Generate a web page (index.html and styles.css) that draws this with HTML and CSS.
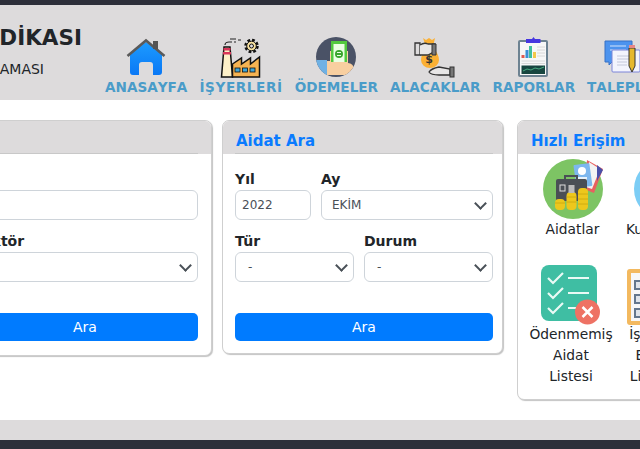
FILE: index.html
```html
<!DOCTYPE html>
<html lang="tr">
<head>
<meta charset="utf-8">
<title>Aidat</title>
<link rel="stylesheet" href="styles.css">
</head>
<body>
<div class="page">
  <div class="topbar"></div>
  <header class="header">
    <div class="brand">
      <div class="brand-title">APARTMAN SENDİKASI</div>
      <div class="brand-sub">AİDAT UYGULAMASI</div>
    </div>
    <nav class="nav">
      <a class="nav-item">
        <svg class="nav-icon" viewBox="0 0 44 40"><defs><linearGradient id="houseBlue" x1="0" y1="0" x2="0" y2="1"><stop offset="0" stop-color="#1c9bff"/><stop offset="1" stop-color="#0a78f5"/></linearGradient></defs><path d="M6 17 22 5l16 12v18a3 3 0 0 1-3 3h-6V28a3 3 0 0 0-3-3h-8a3 3 0 0 0-3 3v10H9a3 3 0 0 1-3-3z" fill="url(#houseBlue)"/><path d="M3.500 19 22 3.500 40.500 19" fill="none" stroke="#5a5a5a" stroke-width="2.600"/><rect x="29" y="4" width="5" height="8" fill="#555"/></svg>
        <span>ANASAYFA</span>
      </a>
      <a class="nav-item nav-item-spaced">
        <svg class="nav-icon" viewBox="0 0 44 40"><path d="M6 8c0-2 2-3 4-3h3M15 5h2M11 2h6M19 3h3" fill="none" stroke="#222" stroke-width="1.200"/><path d="M5 10h6l2.500 30H2.500z" fill="#fdf0c8" stroke="#111" stroke-width="1.500"/><rect x="4.500" y="11" width="7" height="2.500" fill="#d9365a"/><rect x="4" y="15" width="8" height="2.500" fill="#d9365a"/><path d="M13.500 27l9-6v6l9-6v6l9-7v20h-27z" fill="#f6b352" stroke="#111" stroke-width="1.500"/><g fill="#3ea6d8" stroke="#111" stroke-width=".8"><rect x="16" y="31" width="5" height="4"/><rect x="23.500" y="31" width="5" height="4"/><rect x="31" y="31" width="5" height="4"/></g><circle cx="32.500" cy="9" r="5.500" fill="none" stroke="#111" stroke-width="3.500" stroke-dasharray="2.500 1.800"/><circle cx="32.500" cy="9" r="4.800" fill="#f9e2a0" stroke="#111"/><circle cx="32.500" cy="9" r="2" fill="#dddbdc" stroke="#111"/></svg>
        <span>İŞYERLERİ</span>
      </a>
      <a class="nav-item">
        <svg class="nav-icon" viewBox="0 0 44 40"><defs><clipPath id="round"><circle cx="22" cy="20" r="20"/></clipPath></defs><circle cx="22" cy="20" r="20" fill="#4a5266"/><g clip-path="url(#round)"><rect x="0" y="23" width="13" height="18" fill="#6fb1e4"/><path d="M13 24h3V14h18v12a2 2 0 0 1 0 12H13z" fill="#f8cfa0"/></g><rect x="17" y="4" width="16" height="24" fill="#52c93f"/><rect x="19.500" y="7" width="11" height="19" fill="#eaffe4"/><circle cx="25" cy="17" r="4" fill="#3aa52f"/><path d="M23 15.500h4M23 18.500h4" stroke="#eaffe4"/><path d="M17 25h17v3a3 3 0 0 1-3 3H17z" fill="#f8cfa0"/></svg>
        <span>ÖDEMELER</span>
      </a>
      <a class="nav-item">
        <svg class="nav-icon" viewBox="0 0 44 40"><path d="M10 1l3 2 3-2 3 2 3-2-2 9c4 5 6 9 6 13a9 8 0 0 1-18 0c0-4 2-8 5-13z" fill="#fbb034"/><path d="M2 6h5v12H2z" fill="#dddbdc" stroke="#333" stroke-width="1.300"/><path d="M7 8c3-2 6-2 8-1h7v9h-3l-4 2H7" fill="#e8e6e6" stroke="#333" stroke-width="1.300"/><path d="M19 7h4v11h-4z" fill="#777" stroke="#333"/><text class="dollar" x="16" y="26" font-size="11" font-weight="700" fill="#333" text-anchor="middle">$</text><path d="M16 35c2-3 5-4 10-5l11 2v6H26c-4 0-8 0-10-3z" fill="#e8e6e6" stroke="#333" stroke-width="1.300"/><rect x="37" y="30" width="4" height="10" fill="#777" stroke="#333"/></svg>
        <span>ALACAKLAR</span>
      </a>
      <a class="nav-item">
        <svg class="nav-icon" viewBox="0 0 44 40"><rect x="6" y="3" width="30" height="37" rx="2" fill="#6d8291"/><rect x="8" y="5" width="26" height="33" fill="#f7f7f7"/><path d="M14 6V2h6l1.500-2L23 2h5.500v4z" fill="#4636e0"/><rect x="9.500" y="18" width="3" height="3" fill="#e05a50"/><rect x="13.500" y="13" width="3" height="8" fill="#3b8fd8"/><rect x="17" y="9" width="3" height="12" fill="#3fbfa0"/><rect x="21" y="15" width="3" height="6" fill="#f3c84a"/><path d="M25 10h8M25 13h8M25 16h8M25 19h8M9.500 24h23.500M9.500 26.500h23.500" stroke="#d8d8d8"/><rect x="9.500" y="28.500" width="23.500" height="8.500" fill="#17453f"/><path d="M11 34l4-2 4 1 4-2 4 1 5-2" fill="none" stroke="#55c490" stroke-width=".8"/></svg>
        <span>RAPORLAR</span>
      </a>
      <a class="nav-item">
        <svg class="nav-icon" viewBox="0 0 44 40"><path d="M2 4h27v21H9l-3 3v-3H2z" fill="#4c93ee" stroke="#3770c4"/><path d="M7 9h16M7 13h16" stroke="#d4e4fb"/><rect x="9" y="13" width="28" height="22" rx="1" fill="#f3f4fd" stroke="#7c85d8"/><path d="M14 19h14M14 22h14M14 25h10M14 28h10" stroke="#c4c8da"/><path d="M26 11h6v18l-3 6-3-6z" fill="#e5b82e" stroke="#333"/><rect x="26" y="8" width="6" height="3" fill="#e88787"/></svg>
        <span>TALEPLER</span>
      </a>
    </nav>
  </header>
  <main class="content">
    <section class="card card-first">
      <h2 class="card-title"><span class="card-title-text">&nbsp;</span></h2>
      <div class="card-body">
        <div class="field-row">
          <label class="field grow"><span class="field-label">Ad</span><input class="control" type="text"></label>
        </div>
        <div class="field-row">
          <label class="field grow"><span class="field-label">Sektör</span><span class="control select"></span></label>
        </div>
        <button class="btn" type="button">Ara</button>
      </div>
    </section>
    <section class="card card-second">
      <h2 class="card-title"><span class="card-title-text">Aidat Ara</span></h2>
      <div class="card-body">
        <div class="field-row">
          <label class="field f-year"><span class="field-label">Yıl</span><span class="control value">2022</span></label>
          <label class="field grow"><span class="field-label">Ay</span><span class="control select month">EKİM</span></label>
        </div>
        <div class="field-row">
          <label class="field f-type"><span class="field-label">Tür</span><span class="control select dash">-</span></label>
          <label class="field grow"><span class="field-label">Durum</span><span class="control select dash">-</span></label>
        </div>
        <button class="btn" type="button">Ara</button>
      </div>
    </section>
    <section class="card card-quick">
      <h2 class="card-title"><span class="card-title-text">Hızlı Erişim</span></h2>
      <div class="quick-list">
        <div class="quick-row quick-row-top">
          <a class="quick-item quick-item-wide">
            <svg class="quick-icon" viewBox="0 0 60 60"><circle cx="30" cy="30" r="30" fill="#7dc464"/><path d="M44 1l16 9-9 24-10-4z" fill="#e86060"/><path d="M46 3l11 7-8 20-6-2z" fill="#f3f3f3"/><path d="M54 6l6 5-6 11z" fill="#4a50a8"/><rect x="32" y="5" width="16" height="23" rx="1" fill="#7db7ee" transform="rotate(-8 40 17)"/><circle cx="39" cy="12" r="4" fill="#fff"/><rect x="35" y="18" width="9" height="5" fill="#e8f2fb"/><path d="M22 20v-3h12v3" fill="none" stroke="#4a4f55" stroke-width="2"/><rect x="13" y="20" width="31" height="22" rx="2" fill="#4a4f55"/><rect x="17" y="26" width="5" height="6" fill="none" stroke="#ddd"/><rect x="12" y="40" width="10" height="11" rx="4" fill="#edc71c"/><rect x="23.500" y="33" width="10" height="18" rx="4" fill="#edc71c"/><rect x="35" y="29" width="10" height="22" rx="4" fill="#edc71c"/><rect x="25.500" y="26" width="6" height="8" fill="#bbb"/><path d="M12 44h10M23.500 38h10M23.500 43h10M35 35h10M35 40h10M35 45h10" stroke="#c9a60f" stroke-width=".8"/></svg>
            <span>Aidatlar</span>
          </a>
          <a class="quick-item quick-item-wide">
            <svg class="quick-icon" viewBox="0 0 60 60"><circle cx="30" cy="30" r="30" fill="#7ccdf5"/><circle cx="30" cy="24" r="10" fill="#f0c8a0"/><path d="M8 56c4-14 12-18 22-18s18 4 22 18z" fill="#444"/></svg>
            <span>Kullanıcılar</span>
          </a>
        </div>
        <div class="quick-row quick-row-bottom">
          <a class="quick-item quick-item-wide">
            <svg class="quick-icon" viewBox="0 0 60 60"><rect x="0" y="0" width="56" height="56" rx="8" fill="#3fbea3"/><path d="M7 13l5 5 10-10M7 28l5 5 10-10M7 43l5 5 10-10" fill="none" stroke="#eafaf5" stroke-width="2.200"/><path d="M27 13h21M27 28h21M27 43h8" stroke="#eafaf5" stroke-width="2"/><circle cx="46.500" cy="47" r="12.500" fill="#ee7264"/><path d="M41.500 42l10 10M51.500 42l-10 10" stroke="#fff" stroke-width="2.500"/></svg>
            <span>Ödenmemiş<br>Aidat<br>Listesi</span>
          </a>
          <a class="quick-item quick-item-narrow">
            <svg class="quick-icon" viewBox="0 0 60 60"><rect x="0" y="4" width="48" height="56" rx="3" fill="#f3b95f"/><rect x="4" y="8" width="40" height="48" fill="#f7f7f7"/><path d="M8 16h8v8H8zM8 30h8v8H8zM8 44h8v8H8z" fill="#dfe4ea" stroke="#64778d" stroke-width="2"/><rect x="14" y="0" width="16" height="6" rx="2" fill="#d2873e"/></svg>
            <span>İşyerleri<br>Ekstre<br>Listeleri</span>
          </a>
        </div>
      </div>
    </section>
  </main>
  <footer class="footer"></footer>
  <div class="bottombar"></div>
</div>
</body>
</html>
```
FILE: styles.css
```css
* { box-sizing: border-box; }
html, body { margin: 0; padding: 0; overflow: hidden; background: #fff; }
body { font-family: "DejaVu Sans", sans-serif; color: #212529; }
.page { width: 640px; height: 449px; overflow: hidden; display: flex; flex-direction: column; }
.topbar { flex: none; height: 5px; background: #2d2f3a; }
.header { flex: none; height: 95px; background: #dddbdc; display: flex; margin-left: -200px; width: 1000px; }
.brand { flex: none; width: 305px; padding: 20px 0 0 0; text-align: right; white-space: nowrap; }
.brand-title { font-weight: 700; font-size: 21.5px; line-height: 26px; color: #212529; margin-right: 23px; }
.brand-sub { font-size: 14px; line-height: 20px; margin-top: 8px; margin-right: 61px; }
.nav { display: flex; gap: 12px; align-items: flex-end; padding-bottom: 4px; height: 95px; }
.nav-item { display: flex; flex-direction: column; align-items: center; font-weight: 700; font-size: 13.6px; font-kerning: none; line-height: 18px; color: #4a9cc9; white-space: nowrap; }
.nav-item-spaced { letter-spacing: .6px; }
.nav-icon { display: block; width: 44px; height: 40px; margin-bottom: 1px; overflow: visible; }
.dollar { font-family: "DejaVu Sans", sans-serif; }
.content { flex: 1; display: flex; align-items: flex-start; margin-left: -41px; padding-top: 20px; width: 1000px; min-height: 0; }
.card { flex: none; border: 1px solid #cfcfcf; border-radius: 7px; box-shadow: 1px 1px 1px #c4c4c4; background: #fff; overflow: hidden; }
.card-first { width: 253px; height: 236px; margin-right: 10px; }
.card-second { width: 281px; height: 234px; margin-right: 14px; }
.card-quick { width: 260px; height: 280px; }
.card-title { margin: 0; height: 33px; padding: 0 12px; background: #dddbdc; color: #0a7bff; font-size: 15px; font-weight: 700; line-height: 40px; }
.card-title-text { display: block; height: 33px; border-bottom: 1px solid #c8c8c8; white-space: nowrap; text-indent: 1px; }
.card-body { padding: 15px 9px 0 12px; display: flex; flex-direction: column; }
.card-first .card-body { padding-right: 13px; }
.card-first .card-title { padding-right: 13px; }
.card-second .card-title { padding-right: 9px; }
.field-row { display: flex; gap: 10px; height: 62px; }
.field { display: flex; flex-direction: column; min-width: 0; }
.grow { flex: 1; }
.f-year { flex: none; width: 76px; }
.f-type { flex: none; width: 119px; }
.field-label { font-size: 14px; font-weight: 700; line-height: 21px; }
.control { display: block; width: 100%; height: 30px; border: 1px solid #ced4da; border-radius: 6px; background: #fff; font-family: inherit; font-size: 12px; line-height: 28px; color: #495057; padding: 0 6px; position: relative; }
.month { padding-left: 10px; }
.dash { padding-left: 12px; }
.select::after { content: ""; position: absolute; right: 7px; top: 8px; width: 7px; height: 7px; border-right: 2px solid #495057; border-bottom: 2px solid #495057; transform: rotate(45deg); }
.btn { height: 28px; margin-top: 20px; width: 100%; border: 0; border-radius: 5px; background: #007bff; color: #fff; font-family: inherit; font-size: 14px; }
.quick-list { display: flex; flex-direction: column; padding-top: 5px; gap: 25px; }
.quick-row { display: flex; height: 81px; }
.quick-row-top { padding-left: 9px; }
.quick-row-top .quick-icon { margin-bottom: 0; }
.quick-row-bottom { padding-left: 7px; height: auto; }
.quick-item { flex: none; display: flex; flex-direction: column; align-items: center; font-size: 13.8px; line-height: 21px; text-align: center; color: #212529; white-space: nowrap; }
.quick-item-wide { width: 91px; }
.quick-row-bottom .quick-item-wide { width: 92px; }
.quick-item-narrow { width: 80px; }
.quick-icon { display: block; width: 60px; height: 60px; margin-bottom: -1px; }
.footer { flex: none; height: 20px; background: #dddbdc; }
.bottombar { flex: none; height: 9px; background: #2d2f3a; }
```
